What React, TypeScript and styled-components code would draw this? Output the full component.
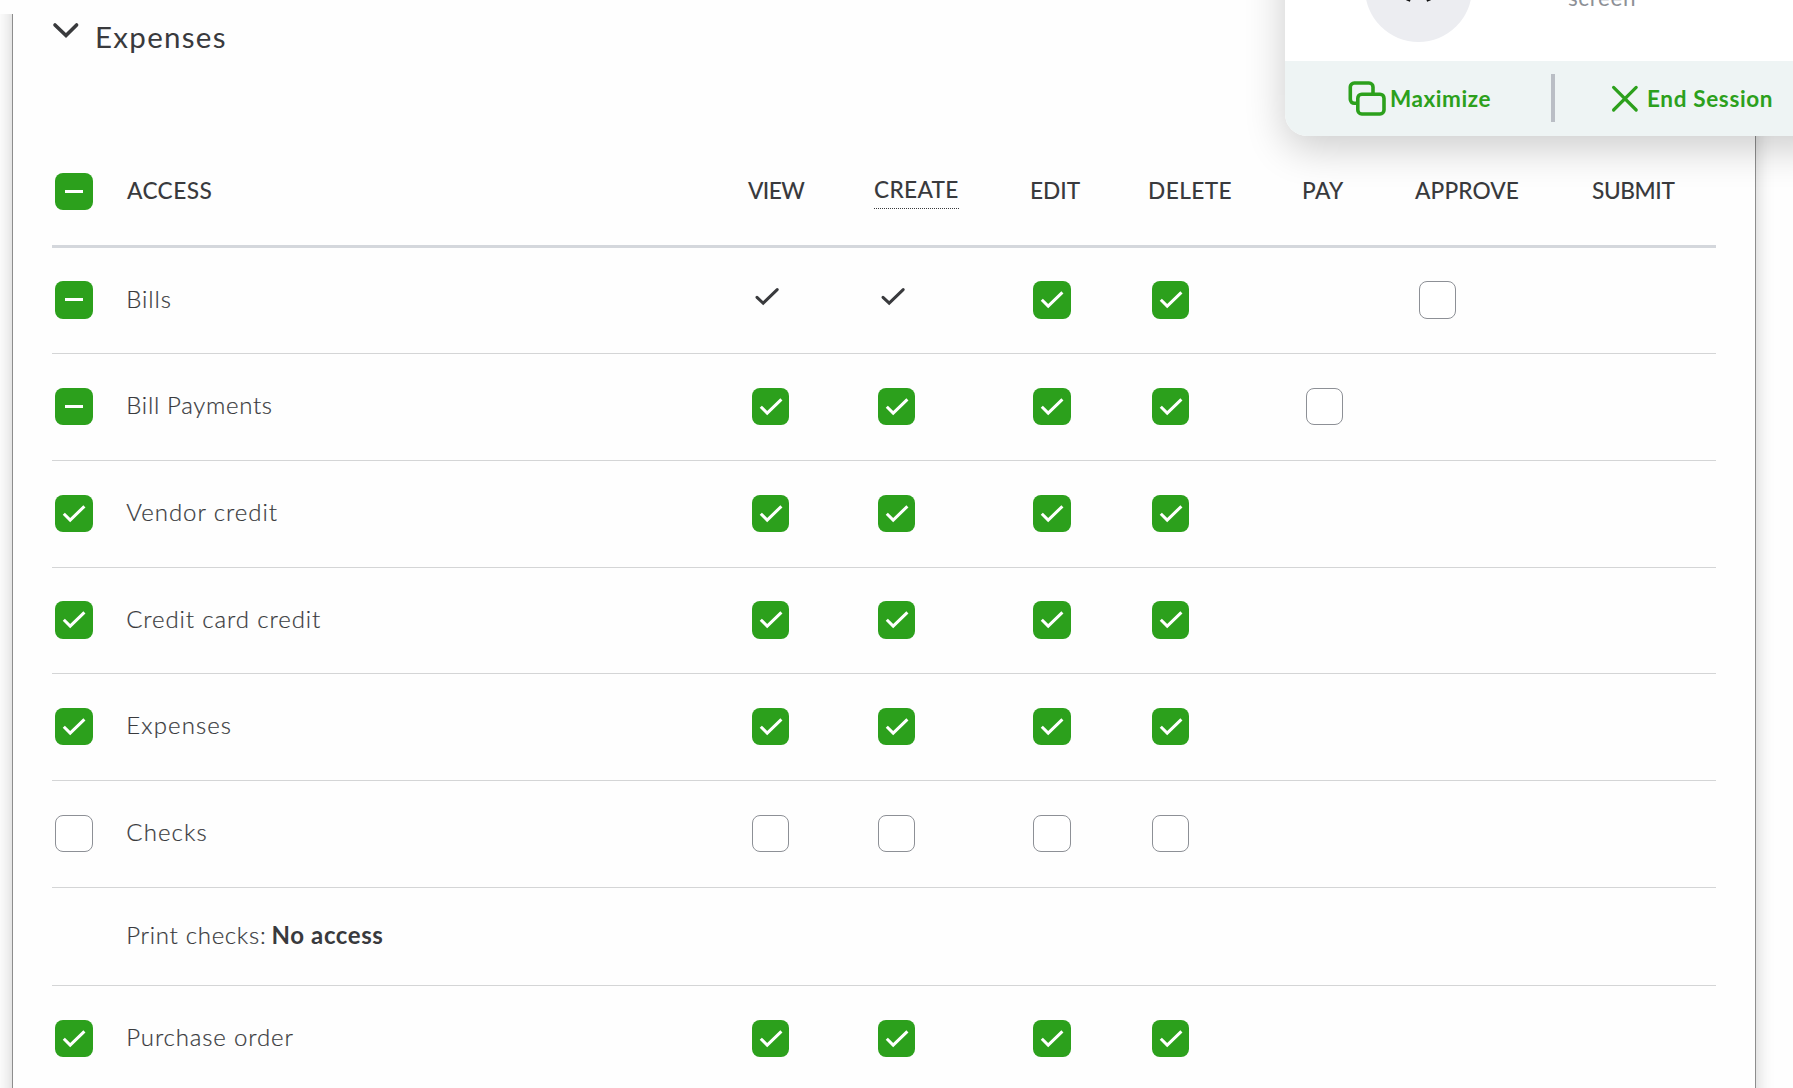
import React from 'react';
import styled, { createGlobalStyle } from 'styled-components';

const GlobalStyle = createGlobalStyle`
  * { box-sizing: border-box; }
  body {
    margin: 0;
    background: #fefefe;
    color: #393a3d;
    font-family: Lato, "Open Sans", sans-serif;
    overflow: hidden;
  }
`;

const Page = styled.div`
  position: relative;
  height: 1088px;
  padding-top: 14px;
  overflow: hidden;
`;

const PanelClip = styled.div`
  height: 1074px;
  padding: 0 37px 0 12px;
  overflow: hidden;
`;

const Panel = styled.section`
  height: 1120px;
  margin-top: -20px;
  padding: 19px 39px 0;
  border: 1px solid #8d8d8d;
  background: #fefefe;
  box-shadow: 0 0 17px rgba(0, 0, 0, 0.2);
`;

const SectionHeader = styled.header`
  display: flex;
  align-items: flex-start;
  height: 141px;
`;

const ChevronIcon = styled.svg`
  width: 28px;
  height: 18px;
  margin-top: 7px;
  flex: none;
`;

const SectionTitle = styled.h2<{ $spacing: number }>`
  margin: 0 0 0 15px;
  font-size: 29.5px;
  font-weight: 400;
  line-height: 45px;
  letter-spacing: ${(p) => p.$spacing}px;
`;

const columns = '75px 621px 126px 156px 118px 154px 113px 177px 124px';

const HeadRow = styled.div`
  display: grid;
  grid-template-columns: ${columns};
  align-items: start;
  height: 93px;
  padding-top: 18px;
  border-bottom: 3px solid #d4d7dc;
`;

const ColumnName = styled.div<{ $spacing: number; $hint?: boolean }>`
  justify-self: start;
  margin-top: ${(p) => (p.$hint ? -3 : -1)}px;
  font-size: 22.7px;
  font-weight: 500;
  line-height: ${(p) => (p.$hint ? 39 : 37)}px;
  height: ${(p) => (p.$hint ? '39px' : 'auto')};
  letter-spacing: ${(p) => p.$spacing}px;
  ${(p) => p.$hint && 'border-bottom: 1px dotted #393a3d;'}
`;

const Row = styled.div<{ $height: number; $top: number }>`
  display: grid;
  grid-template-columns: ${columns};
  align-items: start;
  height: ${(p) => p.$height}px;
  padding-top: ${(p) => p.$top}px;
  border-bottom: 1px solid #d4d5d6;
`;

const Label = styled.div<{ $spacing: number; $shift: number }>`
  margin-top: ${(p) => p.$shift}px;
  margin-left: -0.7px;
  font-size: 24px;
  font-weight: 300;
  line-height: 37px;
  letter-spacing: ${(p) => p.$spacing}px;
  white-space: nowrap;
  -webkit-text-stroke: 0.2px #393a3d;
`;

const NoteLabel = styled(Label)`
  grid-column: 2 / -1;
`;

const Strong = styled.strong`
  margin-left: -2px;
  font-weight: 700;
  letter-spacing: 0.6px;
  -webkit-text-stroke: 0;
`;

const Cell = styled.div<{ $inset: number }>`
  padding-left: ${(p) => p.$inset}px;
`;

const Box = styled.span<{ $on: boolean; $wide: boolean; $tall: boolean }>`
  display: block;
  width: ${(p) => (p.$wide ? 38 : 37)}px;
  height: ${(p) => (p.$tall ? 38 : 37)}px;
  border-radius: 8px;
  border: ${(p) => (p.$on ? 'none' : '1px solid #8d9096')};
  background: ${(p) => (p.$on ? '#2ca01c' : '#fff')};

  svg {
    display: block;
    width: 38px;
    height: 38px;
  }
`;

const ReadOnlyTick = styled.svg`
  display: block;
  width: 38px;
  height: 38px;
`;

const Session = styled.aside`
  position: absolute;
  top: -65px;
  left: 1285px;
  width: 560px;
  height: 201px;
  border-radius: 22px;
  background: #fff;
  box-shadow: 0 12px 40px rgba(0, 0, 0, 0.2);
  overflow: hidden;
`;

const SessionInfo = styled.div`
  display: flex;
  align-items: flex-start;
  height: 126px;
  padding-left: 80px;
`;

const Avatar = styled.div`
  display: flex;
  align-items: flex-start;
  justify-content: center;
  width: 107px;
  height: 107px;
  border-radius: 50%;
  background: #ecedf1;

  svg {
    width: 40px;
    height: 40px;
    margin-top: 27px;
  }
`;

const SessionText = styled.p`
  margin: 49px 0 0 96px;
  color: #8d9096;
  font-size: 22.5px;
  line-height: 27px;
  letter-spacing: 0.6px;
`;

const SessionActions = styled.div`
  display: flex;
  align-items: flex-start;
  height: 75px;
  padding: 13px 0 0 63px;
  background: #eef4f4;
`;

const Action = styled.button<{ $gap: number; $width: number; $spacing: number }>`
  display: flex;
  align-items: center;
  gap: ${(p) => p.$gap}px;
  width: ${(p) => p.$width}px;
  height: 50px;
  padding: 0;
  border: 0;
  background: none;
  color: #2ca01c;
  font: 700 22.5px/50px Lato, sans-serif;
  letter-spacing: ${(p) => p.$spacing}px;
  white-space: nowrap;

  svg {
    flex: none;
  }
`;

const Divider = styled.div`
  width: 4px;
  height: 48px;
  margin-right: 56px;
  background: #babec5;
`;

type Mark = 'on' | 'off' | 'some' | 'fixed' | null;

function Check({ state, wide = false, tall = false }: { state: Mark; wide?: boolean; tall?: boolean }) {
  if (!state) return null;
  if (state === 'fixed') {
    return (
      <ReadOnlyTick viewBox="0 0 38 38">
        <path d="M5 16.3 L11.2 22.2 L25.2 8.6" fill="none" stroke="#393a3d" strokeWidth="3" strokeLinecap="round" />
      </ReadOnlyTick>
    );
  }
  return (
    <Box $on={state !== 'off'} $wide={wide} $tall={tall}>
      {state === 'on' && (
        <svg viewBox="0 0 38 38">
          <path d="M8.8 18.7 L15.2 25.1 L29.4 11.3" fill="none" stroke="#fff" strokeWidth="3" />
        </svg>
      )}
      {state === 'some' && (
        <svg viewBox="0 0 38 38">
          <path d="M10 18.5 H28" fill="none" stroke="#fff" strokeWidth="3" />
        </svg>
      )}
    </Box>
  );
}

const headings = [
  { text: 'VIEW', spacing: -0.6 },
  { text: 'CREATE', spacing: 0.3, hint: true },
  { text: 'EDIT', spacing: 0 },
  { text: 'DELETE', spacing: 0.4 },
  { text: 'PAY', spacing: 0.3 },
  { text: 'APPROVE', spacing: 0.1 },
  { text: 'SUBMIT', spacing: -0.4 },
];

interface AccessRow {
  label: string;
  spacing: number;
  height: number;
  top: number;
  all: Mark;
  marks: Mark[];
}

const every: Mark[] = ['on', 'on', 'on', 'on'];

const rows: AccessRow[] = [
  { label: 'Bills', spacing: 0.9, height: 106, top: 33, all: 'some', marks: ['fixed', 'fixed', 'on', 'on', null, 'off'] },
  { label: 'Bill Payments', spacing: 0.68, height: 107, top: 34, all: 'some', marks: [...every, 'off'] },
  { label: 'Vendor credit', spacing: 0.95, height: 107, top: 34, all: 'on', marks: every },
  { label: 'Credit card credit', spacing: 0.9, height: 106, top: 33, all: 'on', marks: every },
  { label: 'Expenses', spacing: 1.1, height: 107, top: 34, all: 'on', marks: every },
  { label: 'Checks', spacing: 1.1, height: 107, top: 34, all: 'off', marks: ['off', 'off', 'off', 'off'] },
];

function DataRow({ row }: { row: AccessRow }) {
  const tall = row.top === 33;
  return (
    <Row $height={row.height} $top={row.top}>
      <Cell $inset={3}>
        <Check state={row.all} wide tall={tall} />
      </Cell>
      <Label $spacing={row.spacing} $shift={tall ? -1 : -2}>
        {row.label}
      </Label>
      {row.marks.map((m, i) => (
        <Cell key={i} $inset={i === 2 ? 3 : 4}>
          <Check state={m} wide={i === 2} tall={tall} />
        </Cell>
      ))}
    </Row>
  );
}

export default function App() {
  return (
    <Page>
      <GlobalStyle />
      <PanelClip>
        <Panel>
          <SectionHeader>
            <ChevronIcon viewBox="0 0 28 18">
              <path d="M3 4 L14 14.6 L24.6 4" fill="none" stroke="#393a3d" strokeWidth="3.6" strokeLinecap="round" />
            </ChevronIcon>
            <SectionTitle $spacing={1.3}>Expenses</SectionTitle>
          </SectionHeader>

          <HeadRow>
            <Cell $inset={3}>
              <Check state="some" wide />
            </Cell>
            <ColumnName $spacing={0.4}>ACCESS</ColumnName>
            {headings.map((h) => (
              <ColumnName key={h.text} $spacing={h.spacing} $hint={h.hint}>
                {h.text}
              </ColumnName>
            ))}
          </HeadRow>

          {rows.map((r) => (
            <DataRow key={r.label} row={r} />
          ))}
          <Row $height={98} $top={28}>
            <NoteLabel $spacing={0.7} $shift={0}>
              Print checks: <Strong>No access</Strong>
            </NoteLabel>
          </Row>
          <DataRow row={{ label: 'Purchase order', spacing: 0.85, height: 107, top: 34, all: 'on', marks: every }} />
        </Panel>
      </PanelClip>

      <Session>
        <SessionInfo>
          <Avatar>
            <svg viewBox="0 0 40 40">
              <path d="M9 39 L19 11 L30 39 M13 29 H26" fill="none" stroke="#111" strokeWidth="4" />
            </svg>
          </Avatar>
          <SessionText>screen</SessionText>
        </SessionInfo>
        <SessionActions>
          <Action $gap={4} $width={203} $spacing={0.55}>
            <svg width="38" height="36" viewBox="0 0 38 36" fill="none" stroke="#2ca01c" strokeWidth="3.6">
              <path d="M8.5 22.3 H6.3 a4 4 0 0 1 -4 -4 V6 a4 4 0 0 1 4 -4 H21 a4 4 0 0 1 4 4 V13" />
              <rect x="9.8" y="13.2" width="26.2" height="19.8" rx="4" />
            </svg>
            Maximize
          </Action>
          <Divider />
          <Action $gap={8} $width={190} $spacing={0.65}>
            <svg width="28" height="28" viewBox="0 0 28 28">
              <path d="M2.6 2.4 L25.2 25 M25.2 2.4 L2.6 25" fill="none" stroke="#2ca01c" strokeWidth="3.2" strokeLinecap="round" />
            </svg>
            End Session
          </Action>
        </SessionActions>
      </Session>
    </Page>
  );
}
